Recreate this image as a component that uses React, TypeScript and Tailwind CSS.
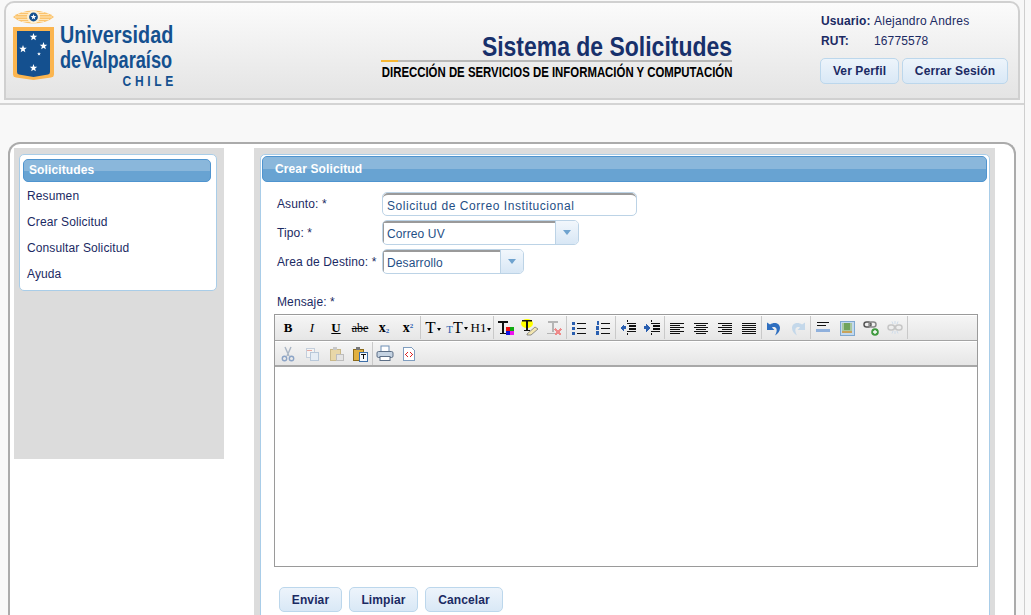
import type { ReactNode } from 'react'

const MENU = ['Resumen', 'Crear Solicitud', 'Consultar Solicitud', 'Ayuda']

function Star({ x, y, r }: { x: number; y: number; r: number }) {
  const pts = Array.from({ length: 10 }, (_, i) => {
    const a = (Math.PI / 5) * i - Math.PI / 2
    const d = i % 2 ? r * 0.42 : r
    return `${(x + Math.cos(a) * d).toFixed(2)},${(y + Math.sin(a) * d).toFixed(2)}`
  }).join(' ')
  return <polygon points={pts} fill="#fff" />
}

function Logo() {
  return (
    <svg width="43" height="70" viewBox="0 0 43 70" className="shrink-0">
      {/* sol */}
      <path d="M1 7Q8 1 21 .5 35 1 42 7 35 13 21 13.500 8 13 1 7z" fill="#fbc36c" />
      <g stroke="#fff3dc" strokeWidth="0.7">
        <path d="M3 7h12M6 4.500h10M6 9.500h10M10 2.500h7M10 11.500h7M27 7h13M26 4.500h11M26 9.500h11M25 2.500h7M25 11.500h7" />
      </g>
      <circle cx="21.5" cy="7" r="6.5" fill="#fff0d2" />
      <circle cx="21.5" cy="7" r="4.4" fill="#14508f" />
      <Star x={21.5} y={7} r={3} />
      {/* escudo */}
      <path d="M1 17h41v47q0 3-3 3.500L21.500 70 4 67.500q-3-.5-3-3.500z" fill="#fbb54f" />
      <path d="M5 21h33v41q0 2-2 2.500L21.500 67 7 64.500q-2-.5-2-2.500z" fill="#14508f" />
      <Star x={21.5} y={27} r={4} />
      <Star x={11} y={39} r={4} />
      <Star x={31.5} y={36} r={4} />
      <Star x={27} y={44} r={2} />
      <Star x={21.5} y={58} r={4} />
    </svg>
  )
}

function Cell({ children }: { children: ReactNode }) {
  return <div className="flex h-[23px] w-6 shrink-0 items-center justify-center">{children}</div>
}

function Sep() {
  return <div className="h-[23px] w-px shrink-0 bg-[#c9c9c9]" />
}

function Ico({ children }: { children: ReactNode }) {
  return <svg width="16" height="16" viewBox="0 0 16 16" shapeRendering="crispEdges">{children}</svg>
}

function Glyph({ children, className }: { children: ReactNode; className: string }) {
  return <span className={`whitespace-nowrap leading-none tracking-normal text-black font-['Liberation_Serif',serif] ${className}`}>{children}</span>
}

function Caret() {
  return <span className="ml-px inline-block h-0 w-0 border-x-[2.5px] border-t-[3px] border-x-transparent border-t-black align-middle" />
}

function Lines({ rows }: { rows: [number, number][] }) {
  return (
    <Ico>
      {rows.map(([x, w], i) => (
        <rect key={i} x={x} y={3 + i * 2} width={w} height="1" fill="#111" />
      ))}
    </Ico>
  )
}

function Toolbar() {
  return (
    <>
      <div className="flex h-[25px] items-start border-b border-[#a3a3a3] bg-gradient-to-b from-[#f5f5f5] to-[#e6e6e6] pl-px">
        <Cell><Glyph className="text-[13px] font-bold">B</Glyph></Cell>
        <Cell><Glyph className="text-[13px] italic">I</Glyph></Cell>
        <Cell><Glyph className="text-[13px] font-bold underline">U</Glyph></Cell>
        <Cell><Glyph className="text-[12px] line-through">abe</Glyph></Cell>
        <Cell><Glyph className="text-[14px] font-bold">x<sub className="text-[7px] text-[#2a5fb0]">2</sub></Glyph></Cell>
        <Cell><Glyph className="text-[14px] font-bold">x<sup className="text-[7px] text-[#2a5fb0]">2</sup></Glyph></Cell>
        <Sep />
        <Cell><Glyph className="text-[17px]">T<Caret /></Glyph></Cell>
        <Cell><Glyph className="text-[16px]"><span className="text-[11px] text-[#2a5fb0]">T</span>T<Caret /></Glyph></Cell>
        <Cell><Glyph className="text-[13px]">H1<Caret /></Glyph></Cell>
        <Sep />
        <Cell>
          <Ico>
            <rect x="0" y="1" width="10" height="1.500" fill="#111" />
            <rect x="4" y="1" width="2" height="12" fill="#111" />
            <rect x="2" y="13" width="6" height="1" fill="#111" />
            <rect x="8" y="7" width="4" height="4" fill="#e11" />
            <rect x="12" y="7" width="4" height="4" fill="#1a1" />
            <rect x="8" y="11" width="4" height="4" fill="#11d" />
            <rect x="12" y="11" width="4" height="4" fill="#e1e" />
          </Ico>
        </Cell>
        <Cell>
          <svg width="18" height="17" viewBox="0 0 18 17">
            <ellipse cx="6" cy="4.500" rx="6" ry="4.500" fill="#ff0" />
            <rect x="1" y="1" width="10" height="1.500" fill="#111" />
            <rect x="5" y="1" width="2" height="10" fill="#111" />
            <rect x="3" y="11" width="6" height="1" fill="#111" />
            <path d="M6 15l8-7 3 2-7 6H6z" fill="#f3e6b0" stroke="#777" strokeWidth="0.8" />
          </svg>
        </Cell>
        <Cell>
          <Ico>
            <rect x="2" y="1" width="10" height="1.500" fill="#b5b5b5" />
            <rect x="6" y="1" width="2" height="11" fill="#b5b5b5" />
            <rect x="1" y="13" width="9" height="1" fill="#b5b5b5" />
            <path d="M9 9l6 6M15 9l-6 6" stroke="#ee8a8a" strokeWidth="2" />
          </Ico>
        </Cell>
        <Sep />
        <Cell>
          <Ico>
            <rect x="1" y="2" width="3" height="3" fill="#2a5fb0" />
            <rect x="1" y="7" width="3" height="3" fill="#2a5fb0" />
            <rect x="1" y="12" width="3" height="3" fill="#2a5fb0" />
            <rect x="6" y="3" width="9" height="1" fill="#111" />
            <rect x="6" y="8" width="9" height="1" fill="#111" />
            <rect x="6" y="13" width="9" height="1" fill="#111" />
          </Ico>
        </Cell>
        <Cell>
          <Ico>
            <rect x="2" y="1" width="2" height="4" fill="#2a5fb0" />
            <rect x="1" y="6" width="3" height="4" fill="#2a5fb0" />
            <rect x="1" y="11" width="3" height="4" fill="#2a5fb0" />
            <rect x="6" y="3" width="9" height="1" fill="#111" />
            <rect x="6" y="8" width="9" height="1" fill="#111" />
            <rect x="6" y="13" width="9" height="1" fill="#111" />
          </Ico>
        </Cell>
        <Sep />
        <Cell>
          <Ico>
            <path d="M0 8l4-4v2h2v3H4v3z" fill="#2a5fb0" />
            <path d="M7 0h1v2H7zM7 13h1v2H7z" fill="#111" />
            <rect x="7" y="3" width="9" height="1" fill="#111" />
            <rect x="9" y="5" width="7" height="2" fill="#111" />
            <rect x="9" y="8" width="7" height="2" fill="#111" />
            <rect x="7" y="11" width="9" height="1" fill="#111" />
          </Ico>
        </Cell>
        <Cell>
          <Ico>
            <path d="M6 8L2 4v2H0v3h2v3z" fill="#2a5fb0" />
            <path d="M7 0h1v2H7zM7 13h1v2H7z" fill="#111" />
            <rect x="7" y="3" width="9" height="1" fill="#111" />
            <rect x="9" y="5" width="7" height="2" fill="#111" />
            <rect x="9" y="8" width="7" height="2" fill="#111" />
            <rect x="7" y="11" width="9" height="1" fill="#111" />
          </Ico>
        </Cell>
        <Sep />
        <Cell><Lines rows={[[1, 14], [1, 10], [1, 14], [1, 10], [1, 14], [1, 10]]} /></Cell>
        <Cell><Lines rows={[[1, 14], [3, 10], [1, 14], [3, 10], [1, 14], [3, 10]]} /></Cell>
        <Cell><Lines rows={[[1, 14], [5, 10], [1, 14], [5, 10], [1, 14], [5, 10]]} /></Cell>
        <Cell><Lines rows={[[1, 14], [1, 14], [1, 14], [1, 14], [1, 14], [1, 14]]} /></Cell>
        <Sep />
        <Cell>
          <svg width="16" height="16" viewBox="0 0 16 16">
            <path d="M4 4.500C8 1.500 14 3 14 8c0 3-2 6-5 7.500 1.500-3 2-5 1.500-6.500C10 7 7.500 6.500 6 7.500L8.500 10H1V2.500z" fill="#2f6fc0" />
          </svg>
        </Cell>
        <Cell>
          <svg width="16" height="16" viewBox="0 0 16 16">
            <path d="M12 4.500C8 1.500 2 3 2 8c0 3 2 6 5 7.500-1.500-3-2-5-1.500-6.500C6 7 8.500 6.500 10 7.500L7.500 10H15V2.500z" fill="#c4d8ea" />
          </svg>
        </Cell>
        <Sep />
        <Cell>
          <Ico>
            <rect x="2" y="2" width="12" height="1" fill="#111" />
            <rect x="2" y="5" width="9" height="1" fill="#111" />
            <rect x="1" y="9" width="14" height="3" fill="#8fb0dc" />
          </Ico>
        </Cell>
        <Cell>
          <Ico>
            <rect x="1" y="1" width="14" height="14" fill="#c2d9ee" stroke="#7fa8cf" />
            <rect x="3" y="3" width="10" height="10" fill="#a9c8a0" />
            <rect x="5" y="3" width="6" height="7" fill="#6fa35a" />
            <rect x="3" y="11" width="10" height="2" fill="#c9a25a" />
          </Ico>
        </Cell>
        <Cell>
          <svg width="16" height="16" viewBox="0 0 16 16">
            <rect x="1" y="2" width="7" height="5" rx="2.500" fill="none" stroke="#555" strokeWidth="1.500" />
            <rect x="6" y="2" width="7" height="5" rx="2.500" fill="none" stroke="#888" strokeWidth="1.500" />
            <circle cx="12" cy="12" r="3.800" fill="#3f9a3f" />
            <path d="M12 10v4M10 12h4" stroke="#fff" strokeWidth="1.300" />
          </svg>
        </Cell>
        <Cell>
          <svg width="16" height="16" viewBox="0 0 16 16">
            <rect x="1" y="5" width="6.500" height="5" rx="2.500" fill="none" stroke="#c6c6c6" strokeWidth="1.500" />
            <rect x="8.500" y="5" width="6.500" height="5" rx="2.500" fill="none" stroke="#c6c6c6" strokeWidth="1.500" />
            <path d="M8 1v3M5 1.500l1 2.500M11 1.500l-1 2.500M8 11v3M5 13.500l1-2.500M11 13.500l-1-2.500" stroke="#cfdcea" strokeWidth="1" />
          </svg>
        </Cell>
        <Sep />
      </div>
      <div className="mt-px flex h-[25px] items-start border-b-2 border-[#a8a8a8] bg-gradient-to-b from-[#f5f5f5] to-[#e6e6e6] pl-px">
        <Cell>
          <svg width="16" height="16" viewBox="0 0 16 16">
            <path d="M5 1l4 9M11 1l-4 9" stroke="#a9b5c4" strokeWidth="1.400" />
            <circle cx="4.500" cy="12.500" r="2.200" fill="none" stroke="#8ca4c6" strokeWidth="1.400" />
            <circle cx="11.500" cy="12.500" r="2.200" fill="none" stroke="#8ca4c6" strokeWidth="1.400" />
          </svg>
        </Cell>
        <Cell>
          <Ico>
            <rect x="2" y="2" width="8" height="9" fill="#f4f4f4" stroke="#c4cfdc" />
            <rect x="6" y="6" width="8" height="8" fill="#e6edf5" stroke="#b8c8da" />
            <rect x="3" y="4" width="5" height="1" fill="#e6a8a0" />
          </Ico>
        </Cell>
        <Cell>
          <Ico>
            <rect x="2" y="3" width="10" height="11" fill="#e8d7a8" stroke="#c9b888" />
            <rect x="5" y="1" width="4" height="3" fill="#c8c8c8" />
            <rect x="8" y="8" width="7" height="6" fill="#e4e4e4" stroke="#bdbdbd" />
          </Ico>
        </Cell>
        <Cell>
          <Ico>
            <rect x="1" y="3" width="10" height="11" fill="#e0b040" stroke="#8a6a1a" />
            <rect x="4" y="1" width="4" height="3" fill="#777" />
            <rect x="7" y="6" width="8" height="9" fill="#f4f8fc" stroke="#3f6fa8" />
            <rect x="9" y="8" width="5" height="1" fill="#111" />
            <rect x="11" y="8" width="1" height="5" fill="#111" />
          </Ico>
        </Cell>
        <Sep />
        <Cell>
          <svg width="18" height="17" viewBox="0 0 18 17">
            <rect x="5" y="1" width="8" height="6" fill="#fff" stroke="#6f8fb5" />
            <rect x="1" y="6.500" width="16" height="6" rx="1.500" fill="#c5d3e2" stroke="#5d6f86" />
            <rect x="4" y="11.500" width="10" height="4" fill="#fff" stroke="#5d6f86" />
          </svg>
        </Cell>
        <Cell>
          <Ico>
            <path d="M2.500 1.500h8l3 3v10h-11z" fill="#fff" stroke="#7f9dbf" />
            <path d="M7 6L4.500 8.500 7 11M9 6l2.500 2.500L9 11" fill="none" stroke="#d22" strokeWidth="1.200" />
          </Ico>
        </Cell>
      </div>
    </>
  )
}

function BlueBar({ children, className }: { children: ReactNode; className: string }) {
  return (
    <div className={`relative overflow-hidden rounded-[5px] border border-[#4f94cf] bg-[#68a3d2] font-bold text-white ${className}`}>
      <div className="absolute inset-x-0 top-0 h-1/2 bg-[#8ab7db]" />
      <span className="relative">{children}</span>
    </div>
  )
}

function LightButton({ children, className = '' }: { children: ReactNode; className?: string }) {
  return (
    <button className={`rounded-[5px] border border-[#bcd7ec] bg-gradient-to-b from-[#edf4fb] to-[#d9e8f6] text-[12px] font-bold text-[#1b2a63] ${className}`}>
      {children}
    </button>
  )
}

function SelectBox({ value, width }: { value: string; width: string }) {
  return (
    <div className={`flex h-[25px] overflow-hidden rounded-[5px] border border-[#bcd3e6] bg-white ${width}`}>
      <div className="flex-1 border-t-2 border-l border-[#9a9a9a] pl-[3px] pt-[2px] text-[#1f4f86]">{value}</div>
      <div className="flex w-[23px] items-center justify-center border-l border-[#bcd3e6] bg-gradient-to-b from-[#f2f7fc] to-[#d8e7f5]">
        <span className="h-0 w-0 border-x-4 border-t-[5px] border-x-transparent border-t-[#6fa3cf]" />
      </div>
    </div>
  )
}

export default function App() {
  return (
    <div className="h-[615px] w-[1031px] overflow-hidden bg-[#f8f8f8] font-['Liberation_Sans',Arial,sans-serif] text-[12px] tracking-[0.12px] text-[#1b2a63]">
      <div className="h-[615px] w-[1025px] border-r border-[#cfcfcf]">
        {/* Cabecera */}
        <div className="h-[105px] border-b-2 border-[#d4d4d4] px-1 pt-px">
          <header className="flex h-[99px] w-[1016px] rounded-t-[10px] border-2 border-[#d0d0d0] bg-gradient-to-b from-[#fbfbfb] to-[#e4e4e4]">
            <div className="flex w-[375px] pl-[6px] pt-[7px]">
              <Logo />
              <div className="ml-[5px] mt-[13px] w-[113px] font-bold tracking-normal text-[#14508f]">
                <div className="h-[25px] origin-left scale-x-[0.86] whitespace-nowrap text-[23px] leading-[25px]">Universidad</div>
                <div className="h-[25px] origin-left scale-x-[0.79] whitespace-nowrap text-[23px] leading-[25px]">deValparaíso</div>
                <div className="mr-[-4px] origin-right scale-x-[0.8] whitespace-nowrap text-right text-[15px] leading-[15px] tracking-[4.6px]">CHILE</div>
              </div>
            </div>
            <div className="w-[351px] pt-[30px] text-right tracking-normal">
              <div className="h-[27px] origin-right scale-x-[0.82] whitespace-nowrap text-[28px] leading-[27px] font-bold text-[#17306b]">Sistema de Solicitudes</div>
              <div className="flex h-[2px]">
                <div className="w-[17px] bg-[#f7b733]" />
                <div className="flex-1 bg-[#b9b9b9]" />
              </div>
              <div className="mt-[2px] flex justify-end">
                <div className="origin-right scale-x-[0.76] whitespace-nowrap text-[15px] leading-[15px] font-bold text-black">DIRECCIÓN DE SERVICIOS DE INFORMACIÓN Y COMPUTACIÓN</div>
              </div>
            </div>
            <div className="ml-[89px] pt-[8px]">
              <div className="flex h-[20px] items-center"><b className="w-[53px]">Usuario:</b><span className="tracking-[0.25px]">Alejandro Andres</span></div>
              <div className="flex h-[20px] items-center"><b className="w-[53px]">RUT:</b>16775578</div>
              <div className="-ml-px mt-[7px] flex gap-[3px]">
                <LightButton className="h-[26px] w-[79px]">Ver Perfil</LightButton>
                <LightButton className="h-[26px] w-[106px]">Cerrar Sesión</LightButton>
              </div>
            </div>
          </header>
        </div>

        {/* Cuerpo */}
        <div className="pl-2 pt-[37px]">
          <div className="flex h-[500px] w-[1008px] rounded-t-[12px] border-2 border-b-0 border-[#ababab] bg-white pl-1 pt-1">
            <aside className="h-[311px] w-[210px] shrink-0 bg-[#dcdcdc] pl-[5px] pt-[6px]">
              <div className="h-[137px] w-[198px] rounded-[5px] border border-[#a9cde8] bg-white px-[3px] pt-1">
                <BlueBar className="h-[23px] w-[188px] pl-[5px] text-[12px] leading-[21px]">Solicitudes</BlueBar>
                <ul className="mt-px pl-[4px]">
                  {MENU.map(item => (
                    <li key={item} className="flex h-[26px] items-center">{item}</li>
                  ))}
                </ul>
              </div>
            </aside>
            <main className="ml-[30px] w-[741px] bg-[#dcdcdc] pl-[6px] pr-[5px] pt-[6px]">
              <div className="h-[500px] rounded-t-[5px] border border-[#a9cde8] bg-white pl-px pr-[2px] pt-px">
                <BlueBar className="h-[26px] w-[725px] pl-[12px] text-[12px] leading-[25px]">Crear Solicitud</BlueBar>
                <div className="pl-[15px]">
                  <div className="mt-[10px] flex h-[24px] items-center">
                    <label className="w-[105px]">Asunto: *</label>
                    <div className="h-[24px] w-[255px] rounded-[5px] border border-[#bcd3e6] bg-white">
                      <div className="h-full rounded-[5px] border-t-2 border-[#9a9a9a] pl-[4px] pt-[2px] tracking-[0.57px] text-[#1f4f86]">Solicitud de Correo Institucional</div>
                    </div>
                  </div>
                  <div className="mt-[4px] flex items-center">
                    <label className="w-[105px] pt-px">Tipo: *</label>
                    <SelectBox value="Correo UV" width="w-[197px]" />
                  </div>
                  <div className="mt-[4px] flex items-center">
                    <label className="w-[105px] whitespace-nowrap pt-px">Area de Destino: *</label>
                    <SelectBox value="Desarrollo" width="w-[142px]" />
                  </div>
                  <div className="mt-[21px] h-[14px] leading-[14px]">Mensaje: *</div>
                  <div className="ml-[-3px] mt-[5px] h-[253px] w-[704px] border border-[#9a9a9a] bg-white pt-px">
                    <Toolbar />
                  </div>
                  <div className="mt-[20px] flex gap-[7px] pl-[2px]">
                    <LightButton className="h-[25px] w-[63px]">Enviar</LightButton>
                    <LightButton className="h-[25px] w-[69px]">Limpiar</LightButton>
                    <LightButton className="h-[25px] w-[78px]">Cancelar</LightButton>
                  </div>
                </div>
              </div>
            </main>
          </div>
        </div>
      </div>
    </div>
  )
}
